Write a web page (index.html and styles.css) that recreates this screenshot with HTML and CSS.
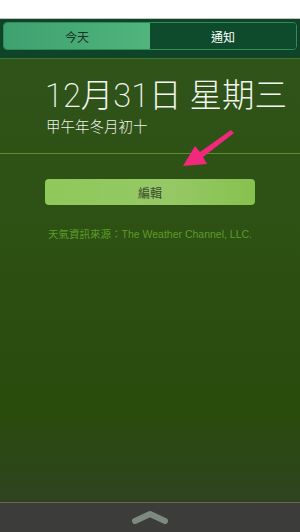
FILE: index.html
```html
<!DOCTYPE html>
<html lang="zh-Hant">
<head>
<meta charset="utf-8">
<link rel="stylesheet" href="styles.css">
</head>
<body>
<div class="screen">
  <div class="status"></div>
  <div class="tabbar">
    <div class="segmented">
      <div class="seg seg-on">今天</div>
      <div class="seg seg-off">通知</div>
    </div>
  </div>
  <div class="main">
    <div class="date-block">
      <div class="date">12月31日 星期三</div>
      <div class="lunar">甲午年冬月初十</div>
    </div>
    <div class="divider"></div>
    <div class="actions">
      <div class="edit-btn">編輯</div>
      <div class="source">天氣資訊來源：The Weather Channel, LLC.</div>
    </div>
    <svg class="arrow" width="300" height="532" viewBox="0 0 300 532">
      <polygon points="231,130 234,133 203,157 207,164 183,166 195,146 200,152" fill="#f2287c"/>
    </svg>
  </div>
  <div class="footer">
    <svg class="chevron" width="40" height="16" viewBox="0 0 40 16">
      <path d="M5 12 L20 5 L35 12" fill="none" stroke="#7d8a80" stroke-width="6" stroke-linecap="round" stroke-linejoin="round"/>
    </svg>
  </div>
</div>
</body>
</html>
```

FILE: styles.css
```css
html, body {
  margin: 0;
  padding: 0;
  background: #ffffff;
}
.screen {
  width: 300px;
  height: 532px;
  display: flex;
  flex-direction: column;
  overflow: hidden;
  font-family: "Liberation Sans", "Noto Sans CJK TC", sans-serif;
  position: relative;
}
.status {
  height: 18px;
  background: #ffffff;
  border-bottom: 1px solid #bfc7c2;
  flex: none;
}
.tabbar {
  height: 40px;
  flex: none;
  background: #0f4428;
  padding: 3px 3px 0 3px;
  box-sizing: border-box;
  border-bottom: 1px solid #3b7a2c;
}
.segmented {
  height: 28px;
  display: flex;
  border: 1px solid #2f8c58;
  border-radius: 4px;
  overflow: hidden;
  box-sizing: border-box;
}
.seg {
  flex: 1;
  display: flex;
  align-items: center;
  justify-content: center;
  font-size: 12px;
}
.seg-on {
  background: linear-gradient(90deg, #3ea170, #50b47c);
  color: #1a3424;
}
.seg-off {
  background: #0e4a2c;
  color: #ffffff;
}
.main {
  flex: 1;
  background: linear-gradient(180deg, #30531a 0%, #2d5013 40%, #294b0c 80%, #2f4320 100%);
  display: flex;
  flex-direction: column;
}
.date-block {
  padding: 18px 0 0 45px;
  height: 94px;
  box-sizing: border-box;
  flex: none;
}
.date {
  font-family: "Roboto", "Noto Sans CJK TC", sans-serif;
  font-weight: 200;
  font-size: 32.5px;
  line-height: 39px;
  color: #f2f6ee;
  white-space: nowrap;
}
.lunar {
  font-family: "Noto Sans CJK TC", sans-serif;
  font-weight: 300;
  font-size: 14.5px;
  line-height: 20px;
  color: #eef2ea;
  padding-left: 1px;
}
.divider {
  height: 1px;
  background: #5a8f28;
  flex: none;
}
.actions {
  padding: 25px 45px 0 45px;
  display: flex;
  flex-direction: column;
  align-items: stretch;
}
.edit-btn {
  height: 26px;
  border-radius: 4px;
  background: linear-gradient(90deg, #8ec95a, #96c866 60%, #86c24e);
  color: #3a4a30;
  font-size: 12px;
  display: flex;
  align-items: center;
  justify-content: center;
}
.source {
  margin-top: 21px;
  font-size: 10.5px;
  color: #5e9a2a;
  text-align: center;
  white-space: nowrap;
  margin-left: -6px;
  margin-right: -6px;
}
.arrow {
  position: absolute;
  left: 0;
  top: 0;
  pointer-events: none;
}
.footer {
  height: 30px;
  flex: none;
  background: #3c3d3b;
  border-top: 1px solid #5d6b55;
  box-sizing: border-box;
  display: flex;
  justify-content: center;
  padding-top: 6px;
}
```
